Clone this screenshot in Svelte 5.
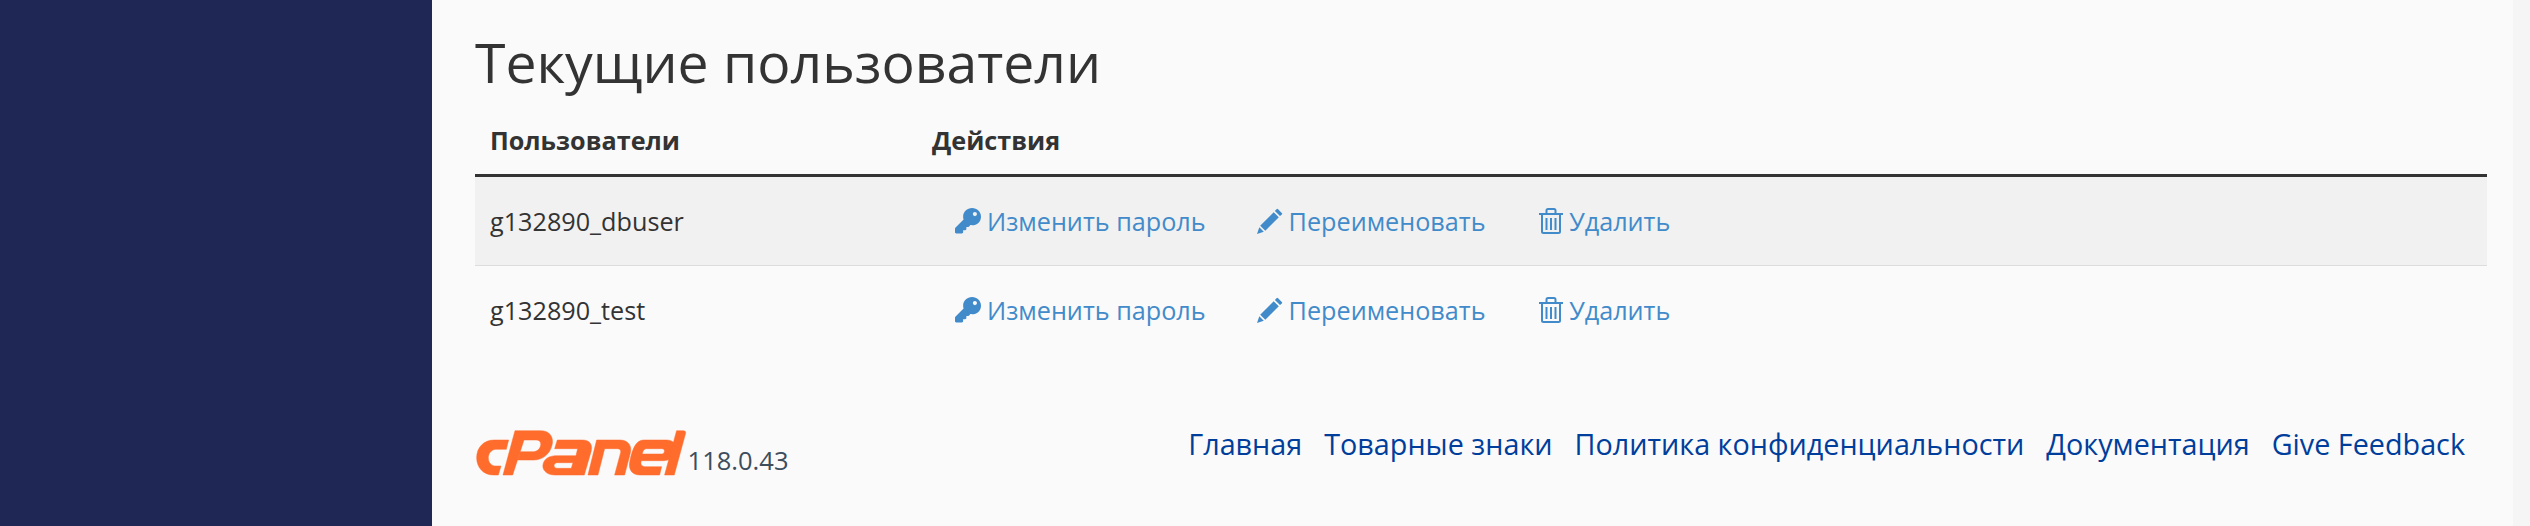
<script>
  const users = ['g132890_dbuser', 'g132890_test'];
  const links = ['Главная', 'Товарные знаки', 'Политика конфиденциальности', 'Документация', 'Give Feedback'];
</script>

<div class="page">
  <aside class="sidebar"></aside>
  <main class="content">
    <h1>Текущие пользователи</h1>
    <table>
      <thead>
        <tr><th class="col-user">Пользователи</th><th>Действия</th></tr>
      </thead>
      <tbody>
        {#each users as user}
          <tr>
            <td>{user}</td>
            <td>
              <div class="actions">
                <a href="#key">
                  <svg viewBox="0 0 512 512"><path d="M512 170C512 270 433 340 336 340c-11 0-22-1-33-3l-24 27a24 24 0 0 1-18 8H224v40c0 13-11 24-24 24h-40v40c0 13-11 24-24 24H24c-13 0-24-11-24-24v-70c0-6 3-12 7-17l162-162C163 208 160 190 160 170 160 73 239 0 336 0 433 0 512 73 512 170zM352 120c0 22 18 40 40 40s40-18 40-40-18-40-40-40-40 18-40 40z" fill-rule="evenodd" /></svg>
                  Изменить пароль
                </a>
                <a href="#rename">
                  <svg viewBox="0 0 26 26"><path d="M19.500 1.200q.8-.8 1.600 0l3.700 3.700q.8.800 0 1.600L23 8.100 17.900 3zM16.700 4.200l5.100 5.100L8.300 22.800 3.200 17.700zM2.300 19.200l4.500 4.500L0 26z" /></svg>
                  Переименовать
                </a>
                <a href="#delete" class="delete">
                  <svg viewBox="0 0 24 26" class="trash">
                    <path d="M0 6h24M7.500 5V2.500Q7.500 1 9 1h6q1.500 0 1.500 1.500V5M3 7v16.500q0 1.500 1.500 1.500h15q1.500 0 1.500-1.500V7M7.500 10v12M12 10v12M16.500 10v12" />
                  </svg>
                  Удалить
                </a>
              </div>
            </td>
          </tr>
        {/each}
      </tbody>
    </table>
    <footer>
      <div class="brand">
        <svg class="logo" viewBox="18 20 632 137">
          <path d="M116 50L109 78H78C64 78 55 92 55 103 55 118 64 128 78 128H93L85 155H70C40 155 20 132 20 103 20 72 42 50 72 50z" />
          <path d="M135 22H212C240 22 252 42 246 66 240 92 218 110 192 110H143L151 85H190C202 85 210 76 212 66 214 56 208 50 198 50H162L128 155H99z" />
          <path fill-rule="evenodd" d="M262 50H338C361 50 369 66 363 86L343 155H255C228 155 214 138 220 120 225 104 240 97 262 97H318L323 76H254zM262 118C249 118 249 135 262 135H304L309 118z" />
          <path d="M380 50H450C475 50 487 68 481 90L464 155H434L452 88C454 80 450 76 442 76H404L384 155H354z" />
          <path fill-rule="evenodd" d="M522 50H590C612 50 622 66 617 84 611 104 598 112 580 112H514C510 126 518 130 528 130H575L569 155H510C486 155 474 138 480 112 488 72 500 50 522 50zM530 76C522 76 518 84 517 92H576C584 92 588 76 576 76z" />
          <path d="M620 22H640C646 22 648 26 647 30L613 155H584z" />
        </svg>
        <span class="version">118.0.43</span>
      </div>
      <nav>
        {#each links as link}
          <a href="#link">{link}</a>
        {/each}
      </nav>
    </footer>
  </main>
  <div class="gutter"></div>
</div>

<style>
  :global(body) {
    margin: 0;
    background: #fafafa;
    font-family: "Open Sans", sans-serif;
    color: #333;
  }

  .page {
    display: flex;
    height: 526px;
    overflow: hidden;
  }

  .sidebar {
    width: 432px;
    background: #1f2754;
    flex: none;
  }

  .content {
    flex: 1;
    padding: 0 26px 0 43px;
  }

  .gutter {
    width: 17px;
    background: #f5f5f5;
    flex: none;
  }

  h1 {
    font-size: 55.3px;
    font-weight: 400;
    line-height: 64px;
    margin: 30px 0 0;
  }

  table {
    width: 100%;
    border-collapse: collapse;
    font-size: 25.2px;
    margin-top: 12px;
  }

  th {
    text-align: left;
    font-weight: 700;
    height: 68px;
    padding: 0 15px;
    border-bottom: 3px solid #333;
  }

  .col-user {
    width: 412px;
  }

  td {
    height: 88px;
    padding: 0 15px;
    border-bottom: 1px solid #ddd;
  }

  tbody tr:nth-child(odd) td {
    background: #f1f1f1;
  }

  tbody tr:last-child td {
    border-bottom: 0;
  }

  .actions {
    display: flex;
    align-items: center;
    gap: 51px;
    padding-left: 23px;
  }

  .actions a {
    color: #428bca;
    text-decoration: none;
    display: flex;
    align-items: center;
    gap: 6px;
  }

  .actions a.delete {
    margin-left: 2.6px;
  }

  .actions svg {
    width: 26px;
    height: 26px;
    fill: #428bca;
  }

  .actions svg.trash {
    width: 24px;
    fill: none;
    stroke: #428bca;
    stroke-width: 2;
  }

  footer {
    display: flex;
    justify-content: space-between;
    align-items: flex-start;
    margin-top: 70px;
    padding-right: 22px;
  }

  .brand {
    display: flex;
    align-items: flex-end;
    padding-top: 6.4px;
  }

  .logo {
    width: 210.6px;
    height: 45.7px;
    margin-left: 1px;
    fill: #ff6c2c;
    stroke: #ff6c2c;
    stroke-width: 1.5;
    stroke-linejoin: round;
  }

  .version {
    font-size: 25.5px;
    line-height: 35px;
    margin-bottom: -1.5px;
    margin-left: 1px;
    color: #3d4d5c;
  }

  nav {
    display: flex;
    gap: 22px;
    font-size: 28.75px;
  }

  nav a {
    color: #003e9c;
    text-decoration: none;
  }
</style>
